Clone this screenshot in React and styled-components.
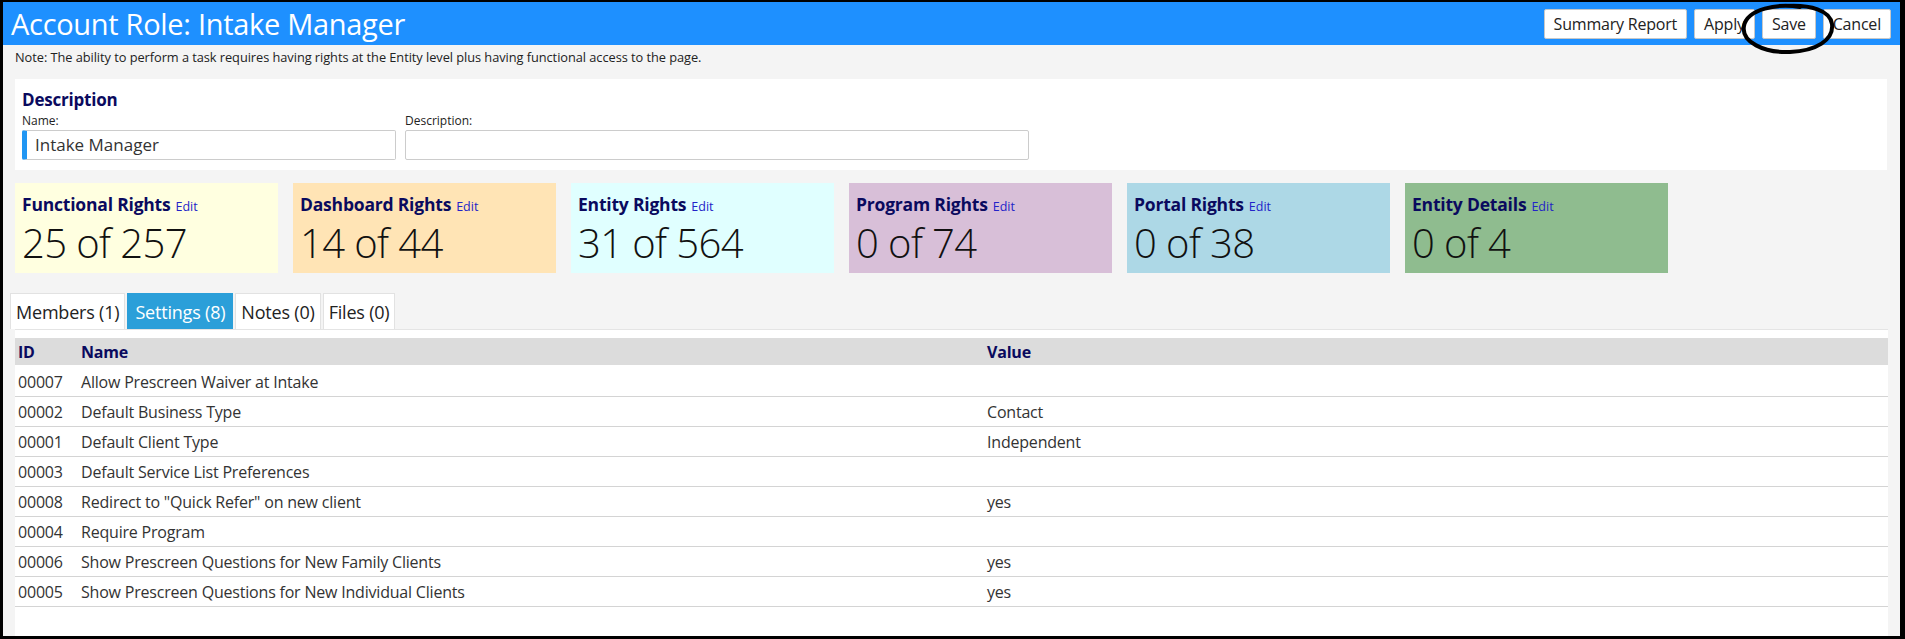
import styled, { createGlobalStyle } from "styled-components";

const GlobalStyle = createGlobalStyle`
  html, body {
    margin: 0;
    padding: 0;
    background: #000;
  }
  body {
    font-family: "Open Sans", "Noto Sans", sans-serif;
  }
`;

const Frame = styled.div`
  box-sizing: border-box;
  width: 1905px;
  height: 639px;
  border: 3px solid #000;
  border-top-width: 2px;
  border-right-width: 5px;
  background: #f4f4f4;
  display: flex;
  flex-direction: column;
  overflow: hidden;
`;

const Header = styled.div`
  height: 43px;
  flex-shrink: 0;
  background: #1e90ff;
  display: flex;
  align-items: center;
  justify-content: space-between;
  padding: 0 9px 0 8px;
`;

const Title = styled.h1`
  margin: 0;
  font-size: 29px;
  font-weight: 400;
  color: #fff;
  letter-spacing: -0.3px;
  line-height: 43px;
`;

const ButtonBar = styled.div`
  display: flex;
  align-items: center;
  gap: 7px;
  margin-top: 1px;
`;

const Button = styled.button`
  height: 30px;
  padding: 0 9px;
  background: #fff;
  border: 1px solid #c8c8c8;
  border-radius: 2px;
  font-family: inherit;
  font-size: 16px;
  color: #222;
  letter-spacing: -0.2px;
  cursor: pointer;
`;

const Circled = styled.span`
  position: relative;
  display: inline-flex;
`;

const Ring = styled.svg`
  position: absolute;
  left: -22px;
  top: -6px;
  width: 96px;
  height: 51px;
  pointer-events: none;
  overflow: visible;
`;

const Body = styled.div`
  flex: 1;
  display: flex;
  flex-direction: column;
  padding: 0 13px 0 12px;
  min-height: 0;
`;

const Note = styled.div`
  font-size: 12.8px;
  color: #222;
  line-height: 15px;
  margin: 5px 0 0;
  letter-spacing: -0.05px;
`;

const Panel = styled.div`
  background: #fff;
  margin-top: 14px;
  padding: 10px 7px 10px;
`;

const SectionTitle = styled.div`
  font-size: 17px;
  font-weight: 700;
  color: #0a0a5e;
  line-height: 21px;
  letter-spacing: -0.2px;
`;

const FieldRow = styled.div`
  display: flex;
  gap: 9px;
  margin-top: 3px;
`;

const Field = styled.div`
  display: flex;
  flex-direction: column;
  width: ${({ $w }) => $w}px;
`;

const Label = styled.label`
  font-size: 12px;
  color: #222;
  line-height: 15px;
  margin-bottom: 2px;
`;

const Input = styled.div`
  box-sizing: border-box;
  height: 30px;
  border: 1px solid #ccc;
  border-left: ${({ $accent }) => ($accent ? "5px solid #2196f3" : "1px solid #ccc")};
  border-radius: 2px;
  font-size: 17px;
  color: #333;
  line-height: 28px;
  padding-left: 8px;
`;

const CardRow = styled.div`
  display: flex;
  gap: 15px;
  margin-top: 13px;
`;

const Card = styled.div`
  box-sizing: border-box;
  width: 263px;
  height: 90px;
  background: ${({ $bg }) => $bg};
  padding: 10px 7px 0;
`;

const CardTitle = styled.div`
  font-size: 17.5px;
  font-weight: 700;
  color: #0a0a5e;
  line-height: 22px;
  letter-spacing: -0.2px;
`;

const Edit = styled.a`
  font-size: 12.5px;
  font-weight: 400;
  color: #2323c8;
  margin-left: 5px;
  letter-spacing: 0;
`;

const Count = styled.div`
  font-size: 40px;
  font-weight: 300;
  color: #111;
  line-height: 50px;
  letter-spacing: -0.6px;
`;

const Tabs = styled.div`
  display: flex;
  gap: 2px;
  margin: 20px 0 0 -5px;
`;

const Tab = styled.div`
  height: 35px;
  padding: 0 ${({ $active }) => ($active ? 7 : 5)}px;
  display: flex;
  align-items: center;
  font-size: 18px;
  letter-spacing: -0.2px;
  background: ${({ $active }) => ($active ? "#2b9fd9" : "#fff")};
  color: ${({ $active }) => ($active ? "#fff" : "#222")};
  border: 1px solid ${({ $active }) => ($active ? "#2b9fd9" : "#e2e2e2")};
  border-bottom: none;
`;

const TablePanel = styled.div`
  flex: 1;
  background: #fff;
  border-top: 1px solid #e4e4e4;
  padding-top: 8px;
  margin-right: -1px;
`;

const Table = styled.table`
  width: 100%;
  border-collapse: collapse;
  font-size: 16px;
  color: #333;
`;

const Th = styled.th`
  text-align: left;
  height: 27px;
  padding: 0 3px;
  background: #dcdcdc;
  color: #0a0a5e;
  font-weight: 700;
  border-bottom: 2px solid #fff;
  letter-spacing: -0.2px;
`;

const Td = styled.td`
  height: 29px;
  padding: 0 3px;
  border-bottom: 1px solid #d4d4d4;
  letter-spacing: -0.2px;
  white-space: nowrap;
`;

const cards = [
  { title: "Functional Rights", count: "25 of 257", bg: "#ffffe0" },
  { title: "Dashboard Rights", count: "14 of 44", bg: "#ffe4b5" },
  { title: "Entity Rights", count: "31 of 564", bg: "#e0ffff" },
  { title: "Program Rights", count: "0 of 74", bg: "#d8bfd8" },
  { title: "Portal Rights", count: "0 of 38", bg: "#add8e6" },
  { title: "Entity Details", count: "0 of 4", bg: "#8fbc8f" },
];

const tabs = [
  { label: "Members (1)" },
  { label: "Settings (8)", active: true },
  { label: "Notes (0)" },
  { label: "Files (0)" },
];

const rows = [
  ["00007", "Allow Prescreen Waiver at Intake", ""],
  ["00002", "Default Business Type", "Contact"],
  ["00001", "Default Client Type", "Independent"],
  ["00003", "Default Service List Preferences", ""],
  ["00008", 'Redirect to "Quick Refer" on new client', "yes"],
  ["00004", "Require Program", ""],
  ["00006", "Show Prescreen Questions for New Family Clients", "yes"],
  ["00005", "Show Prescreen Questions for New Individual Clients", "yes"],
];

const App = () => {
  return (
    <>
      <GlobalStyle />
      <Frame>
        <Header>
          <Title>Account Role: Intake Manager</Title>
          <ButtonBar>
            <Button>Summary Report</Button>
            <Button>Apply</Button>
            <Circled>
              <Button>Save</Button>
              <Ring viewBox="0 0 96 51">
                <path
                  d="M60 4 C38 0 7 6 4 23 C1 39 24 50 50 49 C76 48 94 37 92 21 C90 7 70 2 48 3"
                  fill="none"
                  stroke="#000"
                  strokeWidth="4"
                  strokeLinecap="round"
                />
              </Ring>
            </Circled>
            <Button>Cancel</Button>
          </ButtonBar>
        </Header>
        <Body>
          <Note>
            Note: The ability to perform a task requires having rights at the Entity level plus having
            functional access to the page.
          </Note>
          <Panel>
            <SectionTitle>Description</SectionTitle>
            <FieldRow>
              <Field $w={374}>
                <Label>Name:</Label>
                <Input $accent>Intake Manager</Input>
              </Field>
              <Field $w={624}>
                <Label>Description:</Label>
                <Input />
              </Field>
            </FieldRow>
          </Panel>
          <CardRow>
            {cards.map((c) => (
              <Card key={c.title} $bg={c.bg}>
                <CardTitle>
                  {c.title}
                  <Edit>Edit</Edit>
                </CardTitle>
                <Count>{c.count}</Count>
              </Card>
            ))}
          </CardRow>
          <Tabs>
            {tabs.map((t) => (
              <Tab key={t.label} $active={t.active}>
                {t.label}
              </Tab>
            ))}
          </Tabs>
          <TablePanel>
            <Table>
              <thead>
                <tr>
                  <Th style={{ width: 57 }}>ID</Th>
                  <Th style={{ width: 900 }}>Name</Th>
                  <Th>Value</Th>
                </tr>
              </thead>
              <tbody>
                {rows.map((r) => (
                  <tr key={r[0]}>
                    <Td>{r[0]}</Td>
                    <Td>{r[1]}</Td>
                    <Td>{r[2]}</Td>
                  </tr>
                ))}
              </tbody>
            </Table>
          </TablePanel>
        </Body>
      </Frame>
    </>
  );
};

export default App;
